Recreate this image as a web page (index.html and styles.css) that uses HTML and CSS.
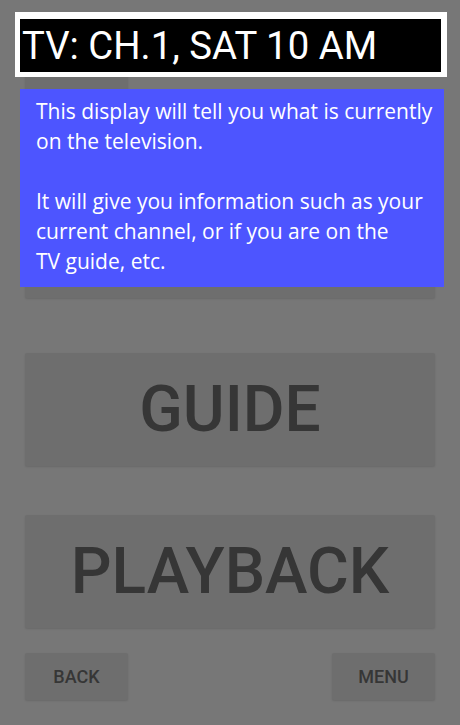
FILE: index.html
```html
<!DOCTYPE html>
<html>
<head>
<meta charset="utf-8">
<link rel="stylesheet" href="styles.css">
</head>
<body>
<div class="screen">
  <div class="controls">
    <div class="btn btn-small btn-top"></div>
    <div class="btn btn-large btn-hidden"></div>
    <div class="btn btn-large btn-guide">GUIDE</div>
    <div class="btn btn-large btn-playback">PLAYBACK</div>
    <div class="bottom-row">
      <div class="btn btn-small">BACK</div>
      <div class="btn btn-small">MENU</div>
    </div>
  </div>

  <div class="display">
    <div class="display-inner">TV: CH.1, SAT 10 AM</div>
  </div>

  <div class="tooltip">
    <p>This display will tell you what is currently on the television.</p>
    <p>It will give you information such as your current channel, or if you are on the<br>TV guide, etc.</p>
  </div>
</div>
</body>
</html>
```

FILE: styles.css
```css
html, body {
  margin: 0;
  padding: 0;
}
body {
  background: #777777;
  width: 460px;
  height: 725px;
  overflow: hidden;
}
.screen {
  position: relative;
  width: 460px;
  height: 725px;
}
.controls {
  display: flex;
  flex-direction: column;
  padding: 66px 25px 0 25px;
}
.btn {
  background: #6e6e6e;
  border-radius: 2px;
  box-shadow: 0 1px 2px rgba(0, 0, 0, 0.12);
  color: #363636;
  font-family: Roboto, "Liberation Sans", sans-serif;
  font-weight: 500;
  display: flex;
  align-items: center;
  justify-content: center;
}
.btn-small {
  width: 103px;
  height: 47px;
  font-size: 18px;
}
.btn-large {
  height: 113px;
  font-size: 64px;
}
.btn-hidden {
  margin-top: 72px;
}
.btn-guide {
  margin-top: 55px;
}
.btn-playback {
  margin-top: 49px;
}
.bottom-row {
  display: flex;
  justify-content: space-between;
  margin-top: 25px;
}
.display {
  position: absolute;
  left: 15px;
  top: 12px;
  width: 421px;
  height: 53px;
  border-style: solid;
  border-color: #ffffff;
  border-width: 7px 6px 5px 5px;
  background: #000;
}
.display-inner {
  color: #ffffff;
  font-family: Roboto, "Liberation Sans", sans-serif;
  font-size: 38.3px;
  line-height: 53px;
  padding-left: 2px;
  white-space: nowrap;
}
.tooltip {
  position: absolute;
  left: 20px;
  top: 89px;
  width: 424px;
  height: 198px;
  box-sizing: border-box;
  padding: 7px 6px 0 16px;
  background: #4d55ff;
  color: #ffffff;
  font-family: "Open Sans", sans-serif;
  font-size: 21px;
  line-height: 30px;
}
.tooltip p {
  margin: 0 0 30px 0;
}
```
